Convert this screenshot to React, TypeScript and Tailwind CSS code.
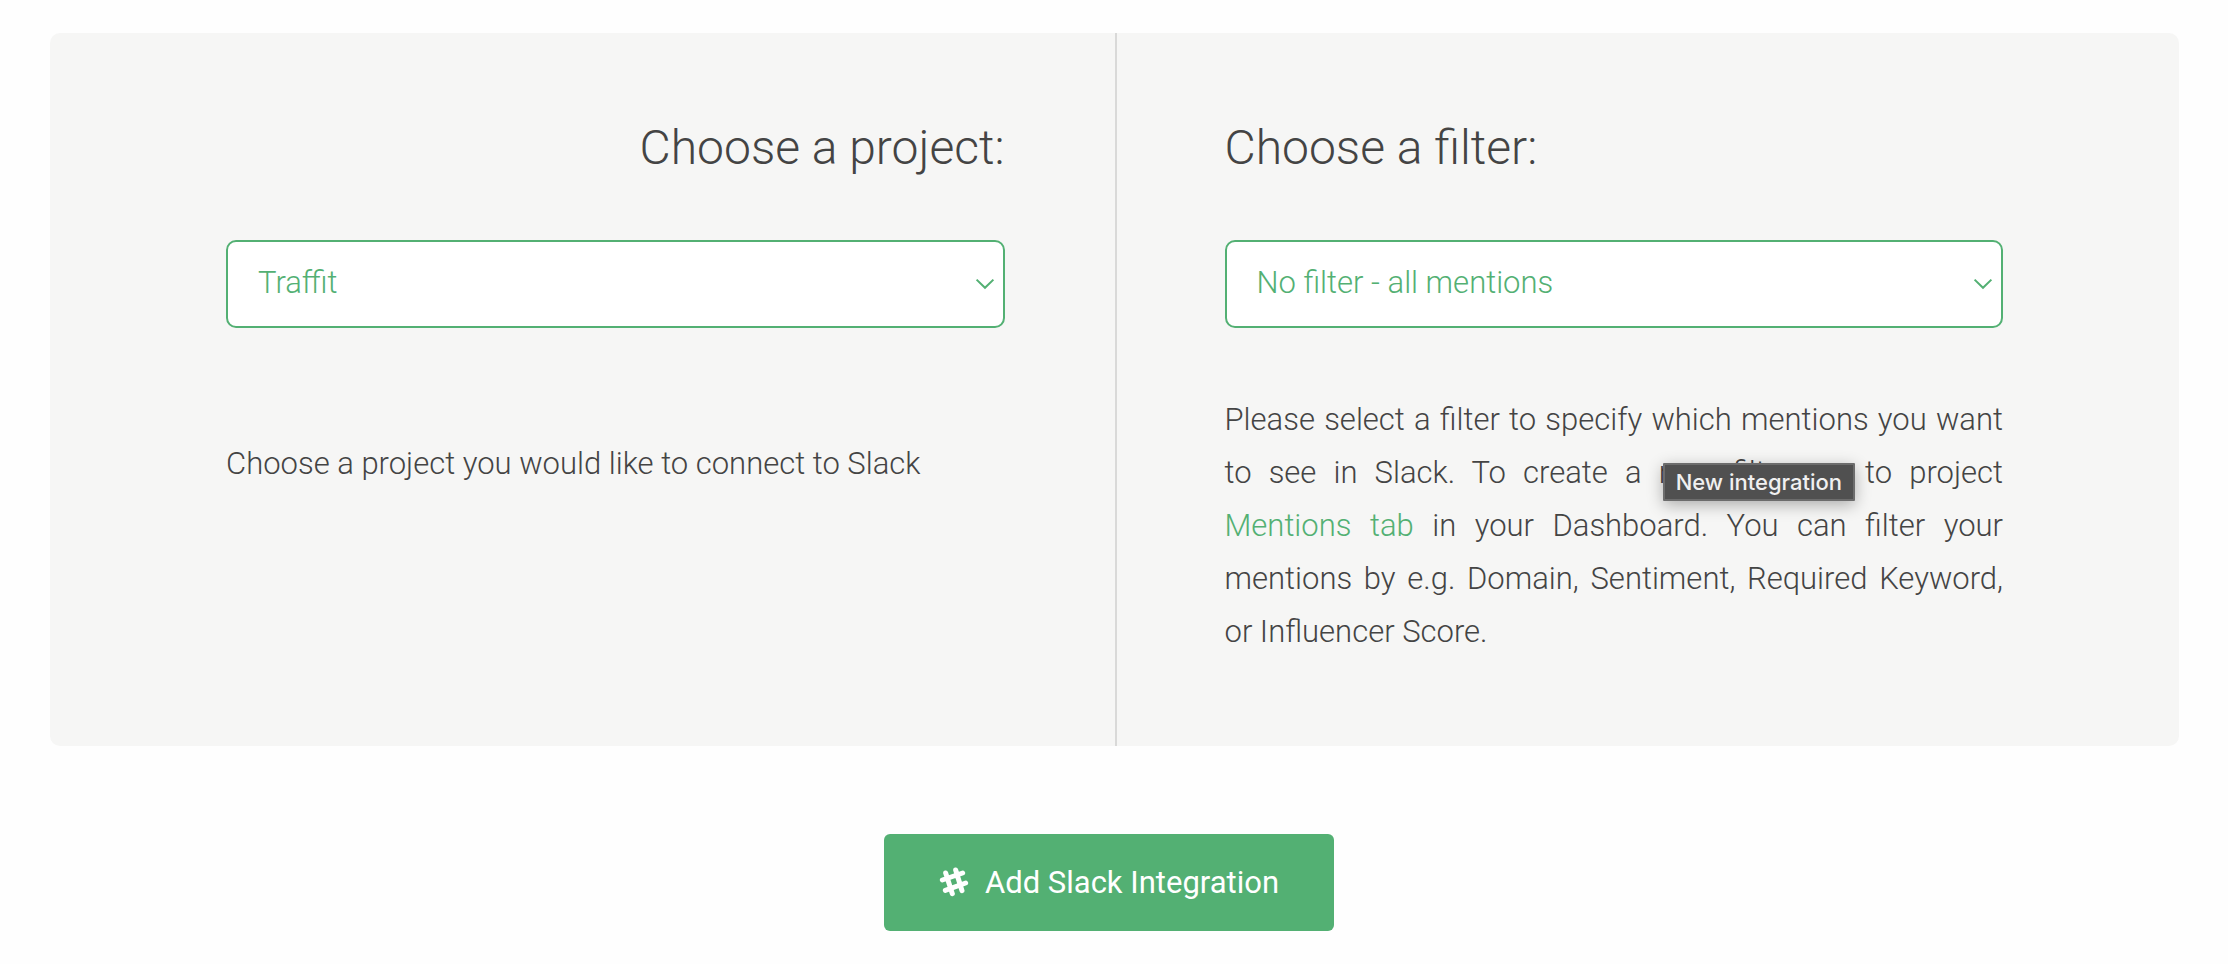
type Option = { value: string; label: string };

function SelectBox({ id, options }: { id: string; options: Option[] }) {
  return (
    <div className="mt-16 grid items-center">
      <select
        id={id}
        className="col-start-1 row-start-1 h-[88px] w-full appearance-none rounded-[10px] border-2 border-[#53b073] bg-white px-[30px] pb-[2px] text-[31px] font-light text-[#53b073]"
      >
        {options.map((o) => (
          <option key={o.value} value={o.value}>
            {o.label}
          </option>
        ))}
      </select>
      <svg
        aria-hidden="true"
        viewBox="0 0 20 12"
        className="pointer-events-none col-start-1 row-start-1 mr-[10px] h-3 w-5 justify-self-end"
        fill="none"
        stroke="#53b073"
        strokeWidth="2"
      >
        <path d="M1.6 1.6 10 9.8 18.4 1.6" />
      </svg>
    </div>
  );
}

function SlackIcon() {
  return (
    <svg
      aria-hidden="true"
      viewBox="0 0 90 90"
      className="mb-1 size-[30px]"
      fill="none"
      stroke="currentColor"
      strokeWidth="15"
      strokeLinecap="round"
    >
      <path d="M20 18 40 80M50 9 69 71M10 39 71 18M19 70 80 48" />
    </svg>
  );
}

export default function App() {
  return (
    <main className="bg-[#fefefe] py-[33px] pr-[49px] pl-[50px] font-[Roboto,sans-serif] font-light text-[#444]">
      <section className="grid grid-cols-2 rounded-[10px] bg-[#f6f6f5]">
        <div className="pt-[87px] pr-[110px] pb-[88px] pl-[176px]">
          <label htmlFor="project" className="block text-right text-[48px] leading-[56px]">
            Choose a project:
          </label>
          <SelectBox id="project" options={[{ value: "traffit", label: "Traffit" }]} />
          <p className="mt-[109px] text-[31px] leading-[53px]">
            Choose a project you would like to connect to Slack
          </p>
        </div>
        <div className="border-l-2 border-[#d9d9d8] pt-[87px] pr-[176px] pb-[88px] pl-[108px]">
          <label htmlFor="filter" className="block text-[48px] leading-[56px]">
            Choose a filter:
          </label>
          <SelectBox id="filter" options={[{ value: "all", label: "No filter - all mentions" }]} />
          <div className="relative mt-[65px]">
            <p className="text-justify text-[31px] leading-[53px]">
              Please select a filter to specify which mentions you want to see in Slack. To create a new filter, go to
              project{" "}
              <a href="#mentions" className="text-[#53b073]">
                Mentions tab
              </a>{" "}
              in your Dashboard. You can filter your mentions by e.g. Domain, Sentiment, Required Keyword, or Influencer
              Score.
            </p>
            <div
              role="tooltip"
              className="absolute top-[70px] right-[148px] rounded-[1px] border-2 border-[#6c6c6c] bg-[#505050] px-[11px] py-[5px] font-[Inter,sans-serif] text-[22px] leading-6 font-medium whitespace-nowrap text-[#f0f0f0] shadow-[0_4px_16px_rgba(0,0,0,0.3)]"
            >
              New integration
            </div>
          </div>
        </div>
      </section>
      <div className="mt-[88px] flex justify-center pr-[11px]">
        <button
          type="button"
          className="flex h-[97px] items-center gap-4 rounded-[6px] bg-[#53b073] px-[55px] pt-[2px] text-[31px] font-normal text-white"
        >
          <SlackIcon />
          Add Slack Integration
        </button>
      </div>
    </main>
  );
}
